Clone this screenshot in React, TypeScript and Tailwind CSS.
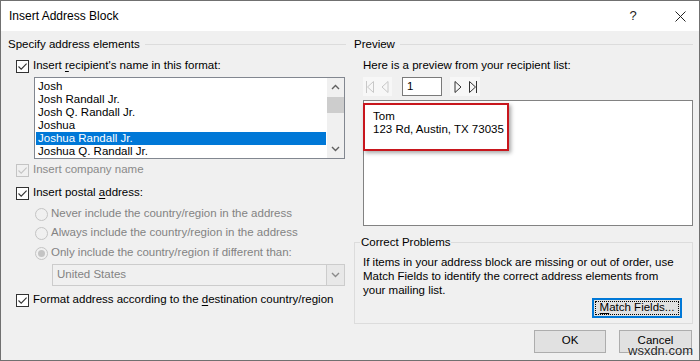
import React from 'react';

// Casilla de verificación estilo Windows 10
function Check({ disabled }: { disabled?: boolean }) {
  const color = disabled ? '#c4c4c4' : '#333333';
  return (
    <span
      className={`flex h-[13px] w-[13px] shrink-0 items-center justify-center border ${
        disabled ? 'border-[#c4c4c4] bg-[#f0f0f0]' : 'border-[#333333] bg-white'
      }`}
    >
      <svg width="11" height="11" viewBox="0 0 11 11">
        <path d="M1.5 5.5 L4.2 8.2 L9.6 2.6" fill="none" stroke={color} strokeWidth="1.1" />
      </svg>
    </span>
  );
}

function Radio({ checked }: { checked?: boolean }) {
  return (
    <span className="flex h-[13px] w-[13px] shrink-0 items-center justify-center rounded-full border border-[#c4c4c4] bg-[#f0f0f0]">
      {checked && <span className="h-[7px] w-[7px] rounded-full bg-[#c4c4c4]" />}
    </span>
  );
}

function Chevron({ up, color = '#606060' }: { up?: boolean; color?: string }) {
  return (
    <svg width="9" height="6" viewBox="0 0 9 6">
      <path
        d={up ? 'M1 5 L4.5 1.5 L8 5' : 'M1 1 L4.5 4.5 L8 1'}
        fill="none"
        stroke={color}
        strokeWidth="1.4"
      />
    </svg>
  );
}

// Iconos de navegación (primero, anterior, siguiente, último)
function NavIcon({ kind, color }: { kind: 'first' | 'prev' | 'next' | 'last'; color: string }) {
  const paths: Record<string, React.ReactNode> = {
    first: (
      <>
        <path d="M1.5 1 L1.5 13" />
        <path d="M8.5 1.5 L2.5 7 L8.5 12.5 Z" />
      </>
    ),
    prev: <path d="M8 1.5 L2 7 L8 12.5 Z" />,
    next: <path d="M2 1.5 L8 7 L2 12.5 Z" />,
    last: (
      <>
        <path d="M1.5 1.5 L7.5 7 L1.5 12.5 Z" />
        <path d="M8.5 1 L8.5 13" />
      </>
    ),
  };
  return (
    <svg width="10" height="14" viewBox="0 0 10 14" fill="none" stroke={color} strokeWidth="1">
      {paths[kind]}
    </svg>
  );
}

const names = [
  'Josh',
  'Josh Randall Jr.',
  'Josh Q. Randall Jr.',
  'Joshua',
  'Joshua Randall Jr.',
  'Joshua Q. Randall Jr.',
];

export default function App() {
  return (
    <div className="relative flex h-[361px] w-[700px] flex-col overflow-hidden border border-[#707070] bg-[#f0f0f0] font-['Liberation_Sans',sans-serif] text-[11.5px] text-black">
      {/* Barra de título */}
      <div className="flex h-[30px] shrink-0 items-center bg-white">
        <span className="ml-[8px] text-[12px]">Insert Address Block</span>
        <span className="ml-auto flex w-[30px] justify-center text-[13px] text-[#222]">?</span>
        <span className="ml-[17px] mr-[4px] flex w-[30px] justify-center">
          <svg width="11" height="11" viewBox="0 0 11 11">
            <path d="M0.5 0.5 L10.5 10.5 M10.5 0.5 L0.5 10.5" stroke="#222" strokeWidth="1" />
          </svg>
        </span>
      </div>

      <div className="flex flex-1">
        {/* Columna izquierda */}
        <div className="flex w-[345px] flex-col">
          <div className="mt-[5px] flex h-[16px] items-center">
            <span className="pl-[7px] leading-[16px]">Specify address elements</span>
            <span className="ml-[5px] h-px flex-1 bg-[#dcdcdc]" />
          </div>

          <div className="mt-[6px] flex h-[16px] items-center gap-[4px] pl-[15px]">
            <Check />
            <span>
              Insert <u className="underline-offset-2">r</u>ecipient's name in this format:
            </span>
          </div>

          {/* Lista de formatos */}
          <div className="ml-[33px] mt-[3px] flex h-[82px] w-[311px] border border-[#828790] bg-white">
            <div className="flex flex-1 flex-col px-px pt-[2px]">
              {names.map((n, i) => (
                <div
                  key={n}
                  className={`h-[13px] pl-[2px] leading-[13px] ${
                    i === 4 ? 'bg-[#0078d7] text-white' : ''
                  }`}
                >
                  {n}
                </div>
              ))}
            </div>
            <div className="flex w-[17px] flex-col bg-[#f0f0f0]">
              <div className="flex h-[18px] items-center justify-center">
                <Chevron up />
              </div>
              <div className="mt-px h-[16px] bg-[#cdcdcd]" />
              <div className="flex-1" />
              <div className="flex h-[18px] items-center justify-center">
                <Chevron />
              </div>
            </div>
          </div>

          <div className="mt-[3px] flex h-[16px] items-center gap-[4px] pl-[15px] text-[#8a8a8a]">
            <Check disabled />
            <span>Insert company name</span>
          </div>

          <div className="mt-[7px] flex h-[16px] items-center gap-[4px] pl-[15px]">
            <Check />
            <span>
              Insert postal <u className="underline-offset-2">a</u>ddress:
            </span>
          </div>

          <div className="mt-[5px] flex h-[16px] items-center gap-[3px] pl-[34px] text-[#838383]">
            <Radio />
            <span>Never include the country/region in the address</span>
          </div>
          <div className="mt-[3px] flex h-[16px] items-center gap-[3px] pl-[34px] text-[#838383]">
            <Radio />
            <span>Always include the country/region in the address</span>
          </div>
          <div className="mt-[4px] flex h-[16px] items-center gap-[3px] pl-[34px] text-[#838383]">
            <Radio checked />
            <span>Only include the country/region if different than:</span>
          </div>

          <div className="ml-[51px] mt-[3px] flex h-[22px] w-[293px] items-center border border-[#cccccc] bg-[#f0f0f0]">
            <span className="flex-1 pl-[4px] text-[#838383]">United States</span>
            <span className="flex h-full w-[18px] items-center justify-center border-l border-[#cccccc] bg-[#e8e8e8]">
              <Chevron color="#8a8a8a" />
            </span>
          </div>

          <div className="mt-[6px] flex h-[16px] items-center gap-[4px] pl-[15px]">
            <Check />
            <span>
              Format address according to the <u className="underline-offset-2">d</u>estination
              country/region
            </span>
          </div>
        </div>

        {/* Columna derecha */}
        <div className="flex flex-1 flex-col">
          <div className="mt-[5px] flex h-[16px] items-center">
            <span className="pl-[8px] leading-[16px]">Preview</span>
            <span className="ml-[5px] mr-[6px] h-px flex-1 bg-[#dcdcdc]" />
          </div>

          <div className="mt-[5px] h-[16px] pl-[17px] leading-[16px]">
            Here is a preview from your recipient list:
          </div>

          <div className="ml-[17px] mt-[4px] flex h-[19px] items-center">
            <div className="flex h-full w-[29px] items-center justify-around bg-[#f7f7f7]">
              <NavIcon kind="first" color="#c8c8c8" />
              <NavIcon kind="prev" color="#c8c8c8" />
            </div>
            <div className="ml-[10px] flex h-full w-[40px] items-center border border-[#7a7a7a] bg-white pl-[4px]">
              1
            </div>
            <div className="ml-[8px] flex h-full w-[30px] items-center justify-around bg-[#f7f7f7]">
              <NavIcon kind="next" color="#333333" />
              <NavIcon kind="last" color="#333333" />
            </div>
          </div>

          <div className="ml-[17px] mt-[4px] h-[126px] w-[330px] border border-[#828282] bg-white">
            <div className="-ml-px mt-[2px] h-[48px] w-[146px] border-2 border-[#c8161d] pl-[8px] pt-[5px] leading-[13px] shadow-[2px_2px_4px_rgba(0,0,0,0.35)]">
              <div>Tom</div>
              <div>123 Rd, Austin, TX 73035</div>
            </div>
          </div>

          <fieldset className="ml-[8px] mt-[8px] w-[339px] border border-[#dcdcdc] px-[8px] pb-[5px]">
            <legend className="-ml-[3px] px-px leading-[16px]">Correct Problems</legend>
            <p className="mt-[5px] whitespace-nowrap leading-[14px]">
              If items in your address block are missing or out of order, use
              <br />
              Match Fields to identify the correct address elements from
              <br />
              your mailing list.
            </p>
            <div className="mt-px flex justify-end pr-[2px]">
              <button className="flex h-[20px] w-[90px] border-2 border-[#0078d7] bg-[#e1e1e1] p-px">
                <span className="flex h-full w-full items-center justify-center border border-dotted border-black">
                  <u className="underline-offset-2">M</u>atch Fields...
                </span>
              </button>
            </div>
          </fieldset>

          <div className="mt-[6px] flex justify-end gap-[13px] pr-[7px]">
            <button className="h-[23px] w-[72px] border border-[#adadad] bg-[#e1e1e1] pb-[2px]">OK</button>
            <button className="h-[23px] w-[73px] border border-[#adadad] bg-[#e1e1e1] pb-[4px] leading-[14px]">
              Cancel
            </button>
          </div>
        </div>
      </div>

      {/* Marca de agua */}
      <span className="absolute left-[627px] top-[342px] text-[13px] leading-[15px] text-[#2a2a2a] [text-shadow:0_0_2px_#fff]">
        wsxdn.com
      </span>
    </div>
  );
}
